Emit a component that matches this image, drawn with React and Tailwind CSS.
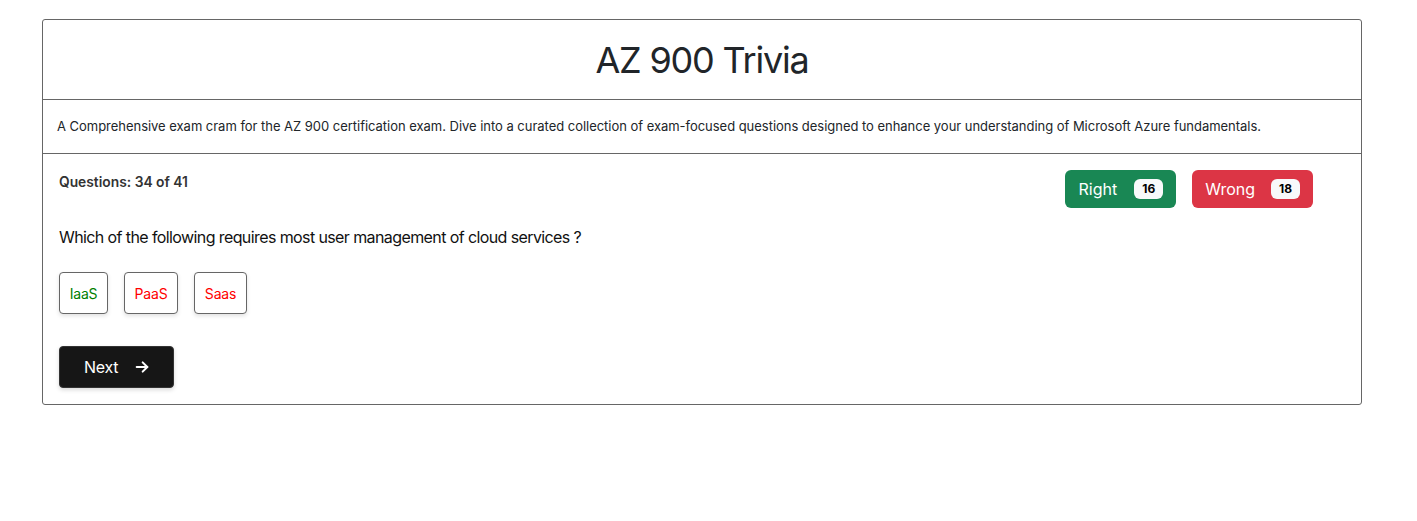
import React from "react";

export default function App() {
  return (
    <div className="min-h-[521px] bg-white pt-[19px] text-[#212529]" style={{ fontFamily: "Inter, 'Noto Sans', sans-serif" }}>
      <div className="ml-[42px] w-[1320px] rounded-[3px] border border-[#666]">
        <div className="flex h-[80px] items-center justify-center border-b border-[#666]">
          <h1 className="text-[36px] font-normal leading-none tracking-[-0.033em] text-[#212529]">AZ 900 Trivia</h1>
        </div>
        <div className="flex h-[54px] items-center border-b border-[#666] px-[14px]">
          <p className="text-[13px] leading-none tracking-[-0.03px] text-[#212529]">
            A Comprehensive exam cram for the AZ 900 certification exam. Dive into a curated collection of exam-focused questions designed to enhance your understanding of Microsoft Azure fundamentals.
          </p>
        </div>
        <div className="px-[16px] pb-[16px] pt-[16px]">
          <div className="flex items-start justify-between">
            <div className="text-[13.8px] font-semibold leading-[24px] text-[#333]">Questions: 34 of 41</div>
            <div className="mr-[32px] flex gap-[16px]">
              <button className="flex h-[38px] items-center rounded-[6px] bg-[#198754] pl-[14px] pr-[13px] text-[16px] text-white">
                Right
                <span className="ml-[17px] rounded-[6px] bg-[#f8f9fa] px-[8px] py-[3px] text-[12px] font-bold leading-[14px] text-black">16</span>
              </button>
              <button className="flex h-[38px] items-center rounded-[6px] bg-[#dc3545] pl-[13px] pr-[13px] text-[16px] text-white">
                Wrong
                <span className="ml-[16px] rounded-[6px] bg-[#f8f9fa] px-[8px] py-[3px] text-[12px] font-bold leading-[14px] text-black">18</span>
              </button>
            </div>
          </div>
          <div className="mt-[17px] text-[16px] leading-[24px] tracking-[-0.6px] text-[#111]">
            Which of the following requires most user management of cloud services ?
          </div>
          <div className="mt-[23px] flex gap-[16px]">
            <button className="h-[42px] w-[49px] rounded-[4px] border border-[#666] bg-white text-[14px] tracking-[-0.2px] text-[#008000] shadow-[0_2px_4px_rgba(0,0,0,0.12)]">IaaS</button>
            <button className="h-[42px] w-[54px] rounded-[4px] border border-[#666] bg-white text-[14px] tracking-[-0.2px] text-[#ff0000] shadow-[0_2px_4px_rgba(0,0,0,0.12)]">PaaS</button>
            <button className="h-[42px] w-[53px] rounded-[4px] border border-[#666] bg-white text-[14px] tracking-[-0.2px] text-[#ff0000] shadow-[0_2px_4px_rgba(0,0,0,0.12)]">Saas</button>
          </div>
          <div className="mt-[32px]">
            <button className="flex h-[42px] w-[115px] items-center rounded-[4px] border border-[#333] bg-[#161616] pl-[24px] text-[16px] tracking-[-0.3px] text-white shadow-[0_2px_4px_rgba(0,0,0,0.15)]">
              Next
              <svg className="ml-[16px]" width="16" height="16" viewBox="0 0 24 24" fill="none" stroke="white" strokeWidth="3" strokeLinecap="round" strokeLinejoin="round">
                <path d="M4 12h16" />
                <path d="M13 5l7 7-7 7" />
              </svg>
            </button>
          </div>
        </div>
      </div>
    </div>
  );
}
